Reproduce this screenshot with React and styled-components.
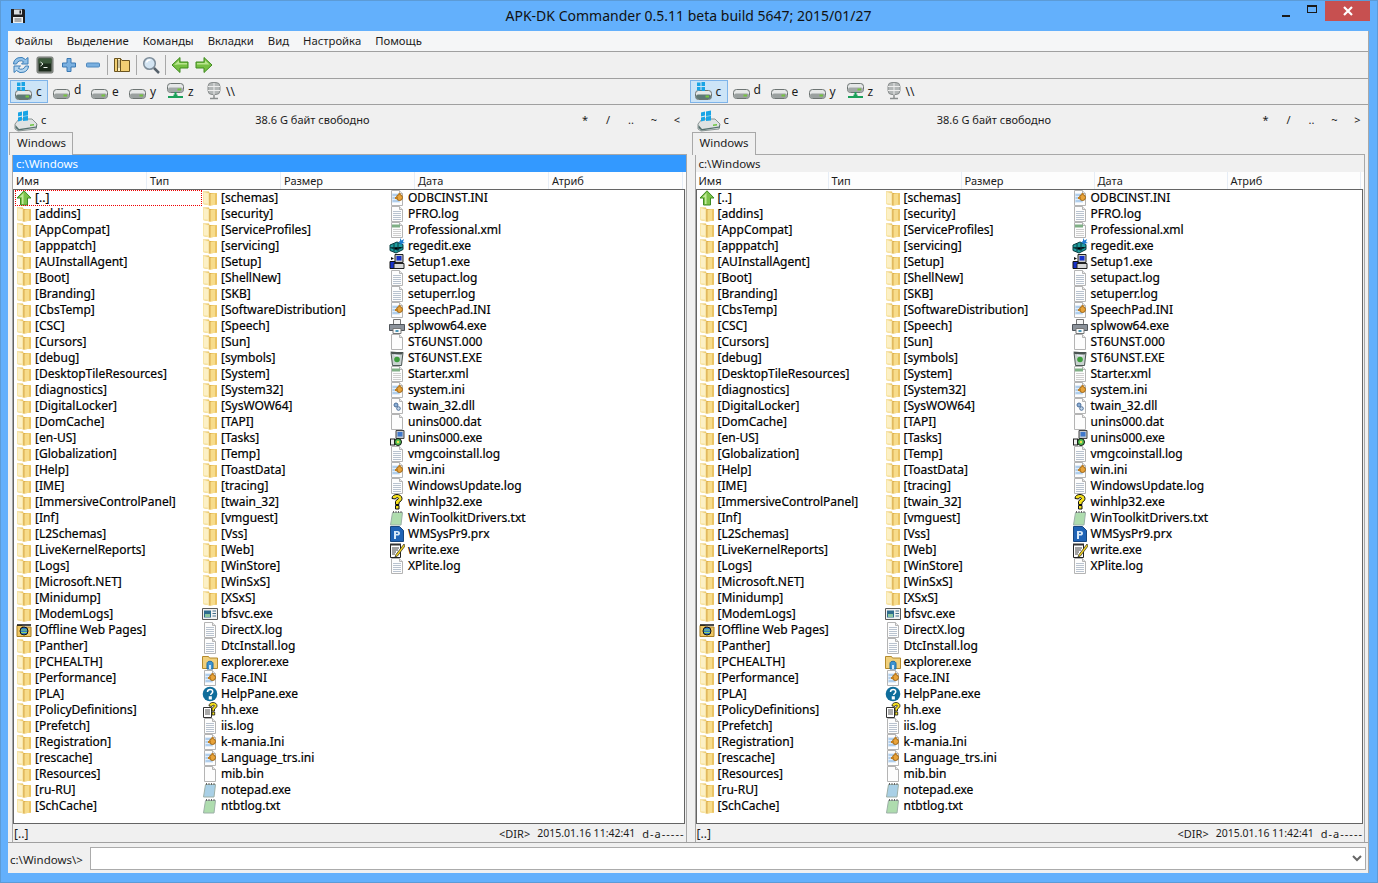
import React from 'react';
import styled, { createGlobalStyle } from 'styled-components';

const col1 = ['AppCompat', 'apppatch', 'AUInstallAgent', 'Boot', 'Branding', 'CbsTemp', 'CSC', 'Cursors', 'debug', 'DesktopTileResources', 'diagnostics', 'DigitalLocker', 'DomCache', 'en-US', 'Globalization', 'Help', 'IME', 'ImmersiveControlPanel', 'Inf', 'L2Schemas', 'LiveKernelReports', 'Logs', 'Microsoft.NET', 'Minidump', 'ModemLogs'];
const col1b = ['Panther', 'PCHEALTH', 'Performance', 'PLA', 'PolicyDefinitions', 'Prefetch', 'Registration', 'rescache', 'Resources', 'ru-RU', 'SchCache'];
const col2 = ['schemas', 'security', 'ServiceProfiles', 'servicing', 'Setup', 'ShellNew', 'SKB', 'SoftwareDistribution', 'Speech', 'Sun', 'symbols', 'System', 'System32', 'SysWOW64', 'TAPI', 'Tasks', 'Temp', 'ToastData', 'tracing', 'twain_32', 'vmguest', 'Vss', 'Web', 'WinStore', 'WinSxS', 'XSxS'];

const dir = (name) => ({ name: `[${name}]`, icon: 'folder' });

const columns = [
    [
        { name: '[..]', icon: 'up', selected: true },
        dir('addins'),
        ...col1.map(dir),
        { name: '[Offline Web Pages]', icon: 'offline' },
        ...col1b.map(dir),
    ],
    [
        ...col2.map(dir),
        { name: 'bfsvc.exe', icon: 'bfsvc' },
        { name: 'DirectX.log', icon: 'log' },
        { name: 'DtcInstall.log', icon: 'log' },
        { name: 'explorer.exe', icon: 'explorer' },
        { name: 'Face.INI', icon: 'ini' },
        { name: 'HelpPane.exe', icon: 'helpBlue' },
        { name: 'hh.exe', icon: 'hh' },
        { name: 'iis.log', icon: 'log' },
        { name: 'k-mania.Ini', icon: 'ini' },
        { name: 'Language_trs.ini', icon: 'ini' },
        { name: 'mib.bin', icon: 'blank' },
        { name: 'notepad.exe', icon: 'notepad' },
        { name: 'ntbtlog.txt', icon: 'txt' },
    ],
    [
        { name: 'ODBCINST.INI', icon: 'ini' },
        { name: 'PFRO.log', icon: 'log' },
        { name: 'Professional.xml', icon: 'xml' },
        { name: 'regedit.exe', icon: 'regedit' },
        { name: 'Setup1.exe', icon: 'setup' },
        { name: 'setupact.log', icon: 'log' },
        { name: 'setuperr.log', icon: 'log' },
        { name: 'SpeechPad.INI', icon: 'ini' },
        { name: 'splwow64.exe', icon: 'printer' },
        { name: 'ST6UNST.000', icon: 'blank' },
        { name: 'ST6UNST.EXE', icon: 'recycle' },
        { name: 'Starter.xml', icon: 'xml' },
        { name: 'system.ini', icon: 'ini' },
        { name: 'twain_32.dll', icon: 'dll' },
        { name: 'unins000.dat', icon: 'blank' },
        { name: 'unins000.exe', icon: 'unins' },
        { name: 'vmgcoinstall.log', icon: 'log' },
        { name: 'win.ini', icon: 'ini' },
        { name: 'WindowsUpdate.log', icon: 'log' },
        { name: 'winhlp32.exe', icon: 'help' },
        { name: 'WinToolkitDrivers.txt', icon: 'txt' },
        { name: 'WMSysPr9.prx', icon: 'prx' },
        { name: 'write.exe', icon: 'write' },
        { name: 'XPlite.log', icon: 'log' },
    ],
];

const Page = () => (
    <>
        <path d="M2.5.5h8l3 3v12h-11z" fill="#fdfdfd" stroke="#b4b4b4" />
        <path d="M10.5.5v3h3" fill="#e8e8e8" stroke="#b4b4b4" />
    </>
);

const Lines = () => (
    <path d="M4 5.5h8M4 7.5h8M4 9.5h8M4 11.5h8M4 13.5h8" stroke="#b9c3cf" />
);

const Gear = () => (
    <>
        <circle cx="10.5" cy="7.5" r="3" fill="#e8a33a" stroke="#9a6417" />
        <path d="M6 8h3M10.5 3v2" stroke="#c27f1f" strokeWidth="2" />
    </>
);

const Spiral = ({ fill }) => (
    <>
        <path d="M3.5 2.5h10l-1.5 12.5H1.5z" fill={fill} stroke="#9db0a8" />
        <path d="M4.5 1v2M7 1v2M9.5 1v2M12 1v2" stroke="#666" />
    </>
);

const iconArt = {
    folder: (
        <>
            <path d="M1 1.500h6l.5 1.500H15v11.500l-7 1L1 14z" fill="#e8bf58" />
            <path d="M1 1.500l6.500 1.500v12.500L1 14z" fill="#f8e6a8" />
            <path d="M2 2.500l4 1v10l-4-.6z" fill="#fcf0c6" />
            <path d="M7.500 3v12.500h1V3z" fill="#cf9f40" />
            <path d="M8.500 4L15 3v11.500l-6.500 1z" fill="#f7dc8b" />
            <path d="M13 3.300h2v11.200h-2z" fill="#ebc465" />
        </>
    ),
    offline: (
        <>
            <path d="M1 3.500h5l1 1.500h8v9.500H1z" fill="#eec663" stroke="#a87f22" />
            <circle cx="8" cy="9" r="4" fill="#2f80c9" stroke="#111" />
            <path d="M5 8h6M5 10.500h6" stroke="#8fd06a" />
            <path d="M1 3h14" stroke="#111" strokeWidth="1.500" />
        </>
    ),
    up: (
        <>
            <path d="M8 .8l7 7.200h-3.500v7h-7V8H1z" fill="#7cc24a" stroke="#3f8a22" />
            <path d="M8 2.500L3.500 7.200h2.500V14h1.500V3.500z" fill="#c4eb9c" />
        </>
    ),
    log: (
        <>
            <Page />
            <Lines />
        </>
    ),
    blank: <Page />,
    ini: (
        <>
            <Page />
            <path d="M3 3h8v10H3z" fill="#d5e7f8" opacity="0.7" />
            <path d="M3.500 5h7M3.500 8h3M3.500 11h7" stroke="#7eaede" />
            <Gear />
        </>
    ),
    xml: (
        <>
            <Page />
            <path d="M3 2.500h8v3H3z" fill="#7faf85" />
            <path d="M4 7.500h8M4 9.500h8M4 11.500h8M4 13.500h8" stroke="#cfcfcf" />
        </>
    ),
    dll: (
        <>
            <Page />
            <circle cx="7" cy="7" r="2" fill="#8aaed6" stroke="#4d6f99" />
            <circle cx="9.500" cy="10.500" r="1.800" fill="#c3d6ea" stroke="#4d6f99" />
        </>
    ),
    regedit: (
        <>
            <path d="M1 7l7-3 6 2.500v5L7 15 1 12.500z" fill="#1f9d9d" stroke="#063b3f" />
            <path d="M1 9.500l7 2.500 6-3M5 5.500v8M9 5v8" stroke="#0c3a44" />
            <path d="M11 0l1.500 2.500L15 1l-1 3 2 1-3 .5-1 2-1-2.500-2-.5 2-1.500z" fill="#1d7bd1" />
        </>
    ),
    setup: (
        <>
            <path d="M6 .5h8v8H6z" fill="#c8c8c8" stroke="#222" />
            <path d="M7.500 2h5v4.500h-5z" fill="#1631c9" />
            <path d="M1 7.500h5v7H1z" fill="#1631c9" stroke="#111" />
            <path d="M5 9.500h10v5H5z" fill="#d8d8d8" stroke="#222" />
            <path d="M2 3l3 1.500-3 1.500z" fill="#111" />
        </>
    ),
    printer: (
        <>
            <path d="M4.500 1.500h7v5h-7z" fill="#f4f4f4" stroke="#777" />
            <path d="M.5 6.500h15v6H.5z" fill="#8c929a" stroke="#50555b" />
            <path d="M4 10.500h8v5H4z" fill="#fbfbfb" stroke="#777" />
            <path d="M6.500 12h3v2h-3z" fill="#4a97b8" />
        </>
    ),
    recycle: (
        <>
            <path d="M2 2.500h12l-1.500 13h-9z" fill="#c9d2d0" stroke="#4b5553" />
            <path d="M1.500 1.500l13 1-2 2-10-.5z" fill="#4b5553" />
            <circle cx="8" cy="9.500" r="2.800" fill="#3c9d3c" />
            <path d="M5 5l6 1" stroke="#eef" />
        </>
    ),
    unins: (
        <>
            <path d="M7 .5h8v8H7z" fill="#c3c9d0" stroke="#444" />
            <path d="M8.500 2h5v4.500h-5z" fill="#3f78cc" />
            <path d="M1 8.500h5v7H1z" fill="#222" />
            <path d="M2 9.500h3v5H2z" fill="#eee" />
            <circle cx="9" cy="12" r="3.500" fill="#53bf53" stroke="#111" />
            <circle cx="9" cy="12" r="1.200" fill="#f0e050" />
        </>
    ),
    help: (
        <path d="M3 4.500C3 1.500 5.500.5 8 .5s5 1.500 5 4c0 2-1.500 3-3 4v2H6.500V7.500c0-1.500 3-2 3-3.200 0-1-3-1-3 .7z M6.500 11.500H10v3.500H6.500z" fill="#f6e11d" stroke="#111" />
    ),
    hh: (
        <>
            <path d="M1.500 5.500h8v10h-8z" fill="#fff" stroke="#333" />
            <path d="M3 8h5M3 10h5M3 12h5" stroke="#555" />
            <path d="M7 4C7 1.500 9 .5 11 .5s4 1.200 4 3.300c0 1.700-1.500 2.300-2.500 3.200v2H10V6.500c0-1.200 2.500-1.700 2.500-2.700 0-.8-2.500-.8-2.500.6zM10 10h2.700v3H10z" fill="#f6e11d" stroke="#111" strokeWidth="0.8" />
        </>
    ),
    helpBlue: (
        <>
            <circle cx="8" cy="8" r="7.300" fill="#0f6d9b" />
            <path d="M5.500 6c0-2 1.500-2.500 2.700-2.500 1.500 0 2.500.9 2.500 2.200 0 1.700-2 1.800-2 3.300M7.500 11h1.600v1.800H7.500z" fill="none" stroke="#fff" strokeWidth="1.500" />
        </>
    ),
    txt: <Spiral fill="#aedcae" />,
    notepad: <Spiral fill="#a9d0e6" />,
    prx: (
        <>
            <path d="M1.500.5h9l4 4v11h-13z" fill="#1f63b5" stroke="#164680" />
            <path d="M5 5h3.500c1.500 0 2.500.8 2.500 2.200S10 9.500 8.500 9.500H7V13H5zM7 6.500v1.500h1.300c.5 0 .8-.3.8-.8s-.3-.7-.8-.7z" fill="#d9e9f8" />
        </>
    ),
    write: (
        <>
            <path d="M1.500 2.500h10v13h-10z" fill="#fff" stroke="#222" />
            <path d="M1 1.500h11v2H1z" fill="#333" />
            <path d="M3 6h7M3 8h6M3 10h4M3 12h3" stroke="#444" />
            <path d="M15 2L7 12.500 6 15l2.500-1L16 4z" fill="#f4d31f" stroke="#222" strokeWidth="0.7" />
        </>
    ),
    bfsvc: (
        <>
            <path d="M.5 2.500h15v11H.5z" fill="#f2f2f2" stroke="#5a5a5a" />
            <path d="M2 4.500h7v7H2z" fill="#2f6d8e" />
            <path d="M3 8h5v3H3z" fill="#8cc6a0" />
            <path d="M10.500 5h3.500M10.500 7.500h3.500M10.500 10h3.500" stroke="#48708c" />
        </>
    ),
    explorer: (
        <>
            <path d="M.5 2.500h6l1 1.500h8v10.500H.5z" fill="#f0d07c" stroke="#b48a2c" />
            <path d="M5 9.500c0-3 6-3 6 0v5.500H5z" fill="#3b93d2" stroke="#1f6a9f" />
            <path d="M7 11h2v4H7z" fill="#cfe6f6" />
        </>
    ),
};

const FileIcon = ({ kind }) => (
    <IconBox viewBox="0 0 16 16">{iconArt[kind]}</IconBox>
);

const SaveIcon = () => (
    <svg width="16" height="16" viewBox="0 0 16 16">
        <path d="M1 1h13l1 1v13H1z" fill="#1d1d1f" />
        <path d="M4 1.500h8v5H4z" fill="#d9dde0" />
        <path d="M9.500 2.500h1.500v3H9.500z" fill="#1d1d1f" />
        <path d="M3 9h10v6H3z" fill="#eceff1" />
        <path d="M4.500 11h7M4.500 13h7" stroke="#666" />
    </svg>
);

const toolArt = {
    refresh: (
        <>
            <path d="M1.500 8A7 7 0 0 1 13.500 3.500L16 1.500v6.500H9.500l2.200-2.200A4.500 4.500 0 0 0 4.500 8z" fill="#8fc0e8" stroke="#3d7fb8" />
            <path d="M16.500 10A7 7 0 0 1 4.500 14.500L2 16.500V10h6.500l-2.200 2.200A4.500 4.500 0 0 0 13.500 10z" fill="#b4d6f0" stroke="#3d7fb8" />
        </>
    ),
    terminal: (
        <>
            <rect x="1" y="1" width="16" height="16" rx="1.500" fill="#8d938d" stroke="#6e736e" />
            <rect x="2.500" y="2.500" width="13" height="13" fill="#1c2b1c" />
            <path d="M2.500 2.500h13v5h-13z" fill="#3d5a3d" />
            <path d="M4.500 6l2.500 2-2.500 2M7.500 11.500h4" fill="none" stroke="#eef4ee" />
        </>
    ),
    plus: <path d="M7 2.500h4v4.500h4.500v4H11v4.500H7V11H2.500V7H7z" fill="#7ab0e0" stroke="#3a78b3" />,
    minus: <rect x="2.500" y="7" width="13" height="4" rx="1" fill="#7ab0e0" stroke="#4f88bd" />,
    zip: (
        <>
            <path d="M1.500 2.500h6l1.500 2h7.500v11h-15z" fill="#f2cf73" stroke="#6a5420" />
            <path d="M4.500 2.500h3v13h-3z" fill="#fff3c4" stroke="#6a5420" />
            <path d="M5.500 5h1M5.500 7h1M5.500 9h1M5.500 11h1" stroke="#333" />
        </>
    ),
    search: (
        <>
            <circle cx="7.500" cy="7.500" r="5.800" fill="#d3e4f2" stroke="#7d8c99" strokeWidth="1.500" />
            <path d="M4.500 6.500a3.500 3.500 0 0 1 4-2.500" fill="none" stroke="#fff" strokeWidth="1.500" />
            <path d="M12 12l5 5" stroke="#56616b" strokeWidth="2.500" />
        </>
    ),
    back: (
        <>
            <path d="M1 9l8-7.500v4.500h8v6H9v4.500z" fill="#77c043" stroke="#3f8b1f" />
            <path d="M3 9l5-4.800V7h8v1.500H7z" fill="#b9e58f" />
        </>
    ),
    forward: (
        <>
            <path d="M17 9L9 1.500v4.500H1v6h8v4.500z" fill="#77c043" stroke="#3f8b1f" />
            <path d="M2 7h8V4.200L14.500 8.500H2z" fill="#b9e58f" />
        </>
    ),
};

const ToolIcon = ({ kind }) => (
    <svg width="18" height="18" viewBox="0 0 18 18">{toolArt[kind]}</svg>
);

const DiskBody = ({ y, tone }) => (
    <g transform={`translate(0 ${y})`}>
        <rect x="0.500" y="0.500" width="16" height="9" rx="3" fill="#e6e8e8" stroke="#6d7473" />
        <rect x="1" y="4.500" width="15" height="4.500" rx="2" fill={tone} />
        <path d="M10.500 5.500h3.500v2h-3.500z" fill="#74c43f" />
    </g>
);

const DriveIcon = ({ kind }) => {
    if (kind === 'system') {
        return (
            <svg width="18" height="18" viewBox="0 0 18 18">
                <DiskBody y={8} tone="#5f7876" />
                <path d="M2 .5h3.500v3.500H2zM6.500 0H10v4H6.500zM2 5h3.500v3.500H2zM6.500 5H10v4H6.500z" fill="#19a4e5" />
            </svg>
        );
    }
    if (kind === 'net') {
        return (
            <svg width="18" height="18" viewBox="0 0 18 18">
                <DiskBody y={1} tone="#a2a8a7" />
                <path d="M8.500 10v4M1 15h15" stroke="#1ba05a" strokeWidth="2" />
                <path d="M6.500 12.500h4V16h-4z" fill="#1ba05a" />
            </svg>
        );
    }
    if (kind === 'share') {
        return (
            <svg width="18" height="18" viewBox="0 0 18 18">
                <rect x="3" y="0.500" width="12" height="12" rx="4" fill="#b3b7b7" stroke="#8a8e8e" />
                <path d="M3 4.500h12M3 8.500h12M9 1v12" stroke="#ececec" />
                <path d="M9 13v3M5 16.500h8" stroke="#8a8e8e" strokeWidth="1.500" />
            </svg>
        );
    }
    return (
        <svg width="18" height="18" viewBox="0 0 18 18">
            <DiskBody y={7} tone="#9aa09f" />
        </svg>
    );
};

const BigDrive = () => (
    <svg width="24" height="24" viewBox="0 0 24 24">
        <path d="M1 16l4-5h13l5 5-1 5-18 2-3-2z" fill="#dfe3e3" stroke="#8a9493" />
        <path d="M1.500 17l3.500 4 17-2.500 1-2.500v3.500l-18.500 3-3-2.500z" fill="#55706e" />
        <path d="M16 16.500l4-.5v1.500l-4 .5z" fill="#6bc43f" />
        <path d="M4 4.500l4-1v4l-4 1zM9 3.500l5-1v5l-5 .5zM4 9.500l4-1v4l-4 1zM9 8.500l5-.5v4.500l-5 .5z" fill="#19a4e5" />
    </svg>
);

const drives = [
    { label: 'c', kind: 'system', active: true },
    { label: 'd', kind: 'disk' },
    { label: 'e', kind: 'disk' },
    { label: 'y', kind: 'disk' },
    { label: 'z', kind: 'net' },
    { label: '\\\\', kind: 'share' },
];

const DriveGroup = () => (
    <Drives>
        {drives.map((d) => (
            <DriveButton key={d.label} $active={d.active}>
                <DriveIcon kind={d.kind} />
                <DriveLabel $raised={d.label === 'd'}>{d.label}</DriveLabel>
            </DriveButton>
        ))}
    </Drives>
);

const FilePanel = ({ active, last }) => (
    <Panel $right={!active}>
        <PanelHead>
            <BigDrive />
            <DriveName>c</DriveName>
            <FreeSpace $right={!active}>38.6 G байт свободно</FreeSpace>
            <Shortcuts $right={!active}>
                {['*', '/', '..', '~', last].map((s) => (
                    <Shortcut key={s}>{s}</Shortcut>
                ))}
            </Shortcuts>
        </PanelHead>
        <TabStrip>
            <Tab>Windows</Tab>
        </TabStrip>
        <TabPage>
            <PathBar $active={active}>c:\Windows</PathBar>
            <HeaderRow>
                {['Имя', 'Тип', 'Размер', 'Дата', 'Атриб'].map((h) => (
                    <HeaderCell key={h} $right={!active}>{h}</HeaderCell>
                ))}
            </HeaderRow>
            <FileList>
                {columns.map((files, i) => (
                    <FileColumn key={i}>
                        {files.map((f) => (
                            <FileRow key={f.name} $focused={active && f.selected}>
                                <FileIcon kind={f.icon} />
                                <FileName>{f.name}</FileName>
                            </FileRow>
                        ))}
                    </FileColumn>
                ))}
            </FileList>
            <StatusBar>
                <StatusName>[..]</StatusName>
                <StatusInfo>
                    <span>&lt;DIR&gt;</span>
                    <StatusDate>2015.01.16 11:42:41</StatusDate>
                    <StatusAttr>d-a-----</StatusAttr>
                </StatusInfo>
            </StatusBar>
        </TabPage>
    </Panel>
);

const App = () => (
    <>
        <GlobalStyle />
        <Window>
            <TitleBar>
                <TitleIcon>
                    <SaveIcon />
                </TitleIcon>
                <Title>APK-DK Commander 0.5.11 beta build 5647; 2015/01/27</Title>
                <Controls>
                    <ControlButton>
                        <MinGlyph />
                    </ControlButton>
                    <ControlButton>
                        <MaxGlyph />
                    </ControlButton>
                    <CloseButton>
                        <svg width="12" height="10" viewBox="0 0 12 10">
                            <path d="M2 1l8 8M10 1L2 9" stroke="#fff" strokeWidth="2.200" />
                        </svg>
                    </CloseButton>
                </Controls>
            </TitleBar>
            <Client>
                <MenuBar>
                    {['Файлы', 'Выделение', 'Команды', 'Вкладки', 'Вид', 'Настройка', 'Помощь'].map((m) => (
                        <MenuItem key={m}>{m}</MenuItem>
                    ))}
                </MenuBar>
                <Toolbar>
                    <ToolButton><ToolIcon kind="refresh" /></ToolButton>
                    <ToolButton><ToolIcon kind="terminal" /></ToolButton>
                    <ToolButton><ToolIcon kind="plus" /></ToolButton>
                    <ToolButton><ToolIcon kind="minus" /></ToolButton>
                    <ToolSep />
                    <ToolButton><ToolIcon kind="zip" /></ToolButton>
                    <ToolSep />
                    <ToolButton><ToolIcon kind="search" /></ToolButton>
                    <ToolSep />
                    <ToolButton><ToolIcon kind="back" /></ToolButton>
                    <ToolButton><ToolIcon kind="forward" /></ToolButton>
                </Toolbar>
                <DriveBar>
                    <DriveGroup />
                    <DriveGroup />
                </DriveBar>
                <Panels>
                    <FilePanel active last="<" />
                    <FilePanel last=">" />
                </Panels>
                <CommandLine>
                    <Prompt>c:\Windows\&gt;</Prompt>
                    <CommandInput>
                        <svg width="10" height="7" viewBox="0 0 10 7">
                            <path d="M1 1l4 4 4-4" fill="none" stroke="#666" strokeWidth="2" />
                        </svg>
                    </CommandInput>
                </CommandLine>
            </Client>
        </Window>
    </>
);

export default App;

const GlobalStyle = createGlobalStyle`
    html, body {
        margin: 0;
        padding: 0;
        overflow: hidden;
    }

    * {
        box-sizing: border-box;
    }
`;

const Window = styled.div`
    width: 1378px;
    height: 883px;
    padding: 0 8px 9px 7px;
    display: flex;
    flex-direction: column;
    background: #63b0fc;
    border: 1px solid #5c9bd6;
    font-family: 'Noto Sans', 'Liberation Sans', sans-serif;
    font-size: 12px;
    color: #1c1c1c;
`;

const TitleBar = styled.div`
    height: 30px;
    flex: none;
    display: grid;
    grid-template-columns: 1fr auto 1fr;
`;

const TitleIcon = styled.div`
    padding: 7px 0 0 2px;
`;

const Title = styled.div`
    padding-top: 4px;
    font-size: 14px;
    line-height: 21px;
    color: #111;
    white-space: nowrap;
`;

const Controls = styled.div`
    display: flex;
    justify-content: flex-end;
    align-items: flex-start;
    margin-right: -1px;
`;

const ControlButton = styled.div`
    width: 26px;
    height: 20px;
    display: flex;
    align-items: center;
    justify-content: center;
`;

const MinGlyph = styled.div`
    width: 8px;
    height: 2px;
    margin-top: 9px;
    background: #1a1a1a;
`;

const MaxGlyph = styled.div`
    width: 10px;
    height: 8px;
    margin-top: -4px;
    border: 1px solid #1a1a1a;
    border-top-width: 2px;
`;

const CloseButton = styled.div`
    width: 45px;
    height: 20px;
    display: flex;
    align-items: center;
    justify-content: center;
    background: #c75050;
`;

const Client = styled.div`
    flex: 1;
    min-height: 0;
    display: flex;
    flex-direction: column;
    background: #f0f0f0;
    border-right: 1px solid #a8a8a8;
`;

const MenuBar = styled.div`
    height: 21px;
    flex: none;
    display: flex;
    align-items: center;
    gap: 14px;
    padding-left: 7px;
    font-size: 11.3px;
    background: #f5f6f7;
    border-bottom: 1px solid #a0a0a0;
`;

const MenuItem = styled.span`
    line-height: 20px;
`;

const Toolbar = styled.div`
    height: 27px;
    flex: none;
    display: flex;
    align-items: center;
    padding-left: 1px;
    border-bottom: 1px solid #a0a0a0;
`;

const ToolButton = styled.div`
    width: 24px;
    height: 24px;
    display: flex;
    align-items: center;
    justify-content: center;
`;

const ToolSep = styled.div`
    width: 1px;
    height: 20px;
    margin: 0 2px;
    background: #a8a8a8;
`;

const DriveBar = styled.div`
    height: 26px;
    flex: none;
    display: flex;
    gap: 1px;
    padding: 0 0 1px 2px;
    border-bottom: 1px solid #a0a0a0;
`;

const Drives = styled.div`
    width: 680px;
    display: flex;
    align-items: center;
`;

const DriveButton = styled.div`
    width: 38px;
    height: 23px;
    display: flex;
    align-items: center;
    gap: 3px;
    padding-left: 4px;
    background: ${({ $active }) => ($active ? '#cce4f7' : 'transparent')};
    border: 1px solid ${({ $active }) => ($active ? '#7eb4ea' : 'transparent')};
`;

const DriveLabel = styled.span`
    position: relative;
    top: ${({ $raised }) => ($raised ? '-2px' : '0')};
`;

const Panels = styled.div`
    flex: 1;
    min-height: 0;
    display: flex;
    gap: 4px;
    border-bottom: 1px solid #a0a0a0;
`;

const Panel = styled.div`
    width: ${({ $right }) => ($right ? '678px' : '679px')};
    display: flex;
    flex-direction: column;
    padding: ${({ $right }) => ($right ? '0 3px 0 1px' : '0 0 0 1px')};
`;

const PanelHead = styled.div`
    height: 27px;
    flex: none;
    display: flex;
    align-items: center;
    padding: 2px 0 0 5px;
    font-size: 11px;
`;

const DriveName = styled.span`
    margin-left: 3px;
`;

const FreeSpace = styled.span`
    margin-left: ${({ $right }) => ($right ? '208px' : '209px')};
`;

const Shortcuts = styled.div`
    margin-left: auto;
    margin-right: ${({ $right }) => ($right ? '-4px' : '-2px')};
    display: flex;
`;

const Shortcut = styled.span`
    width: 23px;
    text-align: center;
`;

const TabStrip = styled.div`
    height: 23px;
    flex: none;
    display: flex;
    align-items: flex-end;
    margin-bottom: -1px;
`;

const Tab = styled.div`
    width: 64px;
    height: 23px;
    padding: 2px 0 0 7px;
    font-size: 11.5px;
    background: #f0f0f0;
    border: 1px solid #a8a8a8;
    border-bottom: none;
    position: relative;
    z-index: 1;
`;

const TabPage = styled.div`
    flex: 1;
    min-height: 0;
    display: flex;
    flex-direction: column;
    margin-left: 3px;
    border: 1px solid #a8a8a8;
    border-bottom: none;
`;

const PathBar = styled.div`
    height: 17px;
    flex: none;
    padding-left: 3px;
    font-size: 11.5px;
    line-height: 17px;
    background: ${({ $active }) => ($active ? '#3399ff' : '#f0f0f0')};
    color: ${({ $active }) => ($active ? '#fff' : '#1c1c1c')};
`;

const HeaderRow = styled.div`
    height: 17px;
    flex: none;
    display: flex;
    font-size: 11px;
    background: #fdfdfd;
`;

const HeaderCell = styled.div`
    width: ${({ $right }) => ($right ? '133px' : '134px')};
    padding-left: 3px;
    line-height: 17px;
    border-right: 1px solid #e6edf6;
`;

const FileList = styled.div`
    flex: 1;
    min-height: 0;
    display: grid;
    grid-template-columns: 186px 187px 1fr;
    align-content: start;
    padding-left: 1px;
    margin-right: 1px;
    background: #fff;
    border: 1px solid #646464;
`;

const FileColumn = styled.div`
    display: flex;
    flex-direction: column;
`;

const FileRow = styled.div`
    height: 16px;
    display: flex;
    align-items: center;
    gap: 3px;
    padding-left: 1px;
    margin-right: ${({ $focused }) => ($focused ? '-1px' : '0')};
    color: #000;
    white-space: nowrap;
    outline: ${({ $focused }) => ($focused ? '1px dotted #f00000' : 'none')};
    outline-offset: -1px;
`;

const FileName = styled.span`
    margin-top: -2px;
    -webkit-text-stroke: 0.2px #000;
`;

const IconBox = styled.svg`
    width: 16px;
    height: 16px;
    flex: none;
`;

const StatusBar = styled.div`
    height: 18px;
    flex: none;
    display: flex;
    justify-content: space-between;
    align-items: center;
    padding: 0 1px;
    font-size: 11px;
`;

const StatusName = styled.span`
    font-size: 12px;
`;

const StatusInfo = styled.div`
    display: flex;
    align-items: center;
    gap: 7px;
`;

const StatusDate = styled.span`
    font-size: 10.5px;
`;

const StatusAttr = styled.span`
    letter-spacing: 1px;
`;

const CommandLine = styled.div`
    height: 30px;
    flex: none;
    display: flex;
    align-items: center;
    padding: 1px 2px 0 2px;
`;

const Prompt = styled.span`
    width: 80px;
    flex: none;
    padding-top: 2px;
    font-size: 11.5px;
`;

const CommandInput = styled.div`
    flex: 1;
    height: 23px;
    display: flex;
    align-items: center;
    justify-content: flex-end;
    padding-right: 3px;
    background: #fff;
    border: 1px solid #ababab;
`;
